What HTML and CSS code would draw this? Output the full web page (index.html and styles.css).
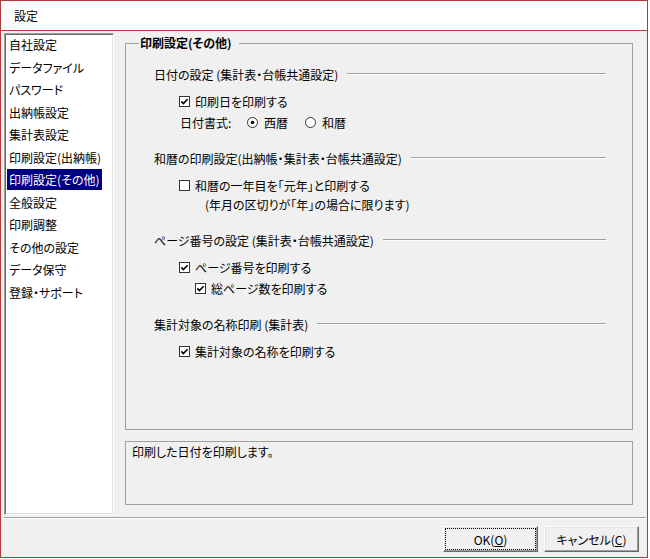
FILE: index.html
```html
<!DOCTYPE html>
<html lang="ja">
<head>
<meta charset="utf-8">
<title>設定</title>
<link rel="stylesheet" href="styles.css">
</head>
<body>
<div class="window">
  <div class="titlebar">設定</div>
  <div class="client">
    <div class="main">
      <div class="tree">
        <ul class="tree-list">
          <li><span>自社設定</span></li>
          <li><span>データファイル</span></li>
          <li><span>パスワード</span></li>
          <li><span>出納帳設定</span></li>
          <li><span>集計表設定</span></li>
          <li><span>印刷設定(出納帳)</span></li>
          <li class="selected"><span>印刷設定(その他)</span></li>
          <li><span>全般設定</span></li>
          <li><span>印刷調整</span></li>
          <li><span>その他の設定</span></li>
          <li><span>データ保守</span></li>
          <li><span>登録・サポート</span></li>
        </ul>
      </div>
      <div class="pane">
        <fieldset class="group">
          <legend>印刷設定(その他)</legend>
          <div class="group-body">
            <div class="section">
              <div class="head"><span>日付の設定 (集計表・台帳共通設定)</span><i class="rule"></i></div>
              <label class="row opt">
                <svg class="cb" width="11" height="11" viewBox="0 0 11 11"><rect x="0.5" y="0.5" width="10" height="10" fill="#fff" stroke="#333"/><path d="M2.3 5.4 L4.4 7.6 L8.6 3.2" fill="none" stroke="#000" stroke-width="1.6"/></svg>
                <span>印刷日を印刷する</span>
              </label>
              <div class="row radio-row">
                <span class="fmt-label">日付書式:</span>
                <label class="radio">
                  <svg width="11" height="11" viewBox="0 0 11 11"><circle cx="5.5" cy="5.5" r="5" fill="#fff" stroke="#333"/><circle cx="5.5" cy="5.5" r="1.8" fill="#000"/></svg>
                  <span>西暦</span>
                </label>
                <label class="radio">
                  <svg width="11" height="11" viewBox="0 0 11 11"><circle cx="5.5" cy="5.5" r="5" fill="#fff" stroke="#333"/></svg>
                  <span>和暦</span>
                </label>
              </div>
            </div>
            <div class="section">
              <div class="head"><span>和暦の印刷設定(出納帳・集計表・台帳共通設定)</span><i class="rule"></i></div>
              <label class="row opt">
                <svg class="cb" width="11" height="11" viewBox="0 0 11 11"><rect x="0.5" y="0.5" width="10" height="10" fill="#fff" stroke="#333"/></svg>
                <span>和暦の一年目を「元年」と印刷する</span>
              </label>
              <div class="row note">(年月の区切りが「年」の場合に限ります)</div>
            </div>
            <div class="section">
              <div class="head"><span>ページ番号の設定 (集計表・台帳共通設定)</span><i class="rule"></i></div>
              <label class="row opt">
                <svg class="cb" width="11" height="11" viewBox="0 0 11 11"><rect x="0.5" y="0.5" width="10" height="10" fill="#fff" stroke="#333"/><path d="M2.3 5.4 L4.4 7.6 L8.6 3.2" fill="none" stroke="#000" stroke-width="1.6"/></svg>
                <span>ページ番号を印刷する</span>
              </label>
              <label class="row opt sub">
                <svg class="cb" width="11" height="11" viewBox="0 0 11 11"><rect x="0.5" y="0.5" width="10" height="10" fill="#fff" stroke="#333"/><path d="M2.3 5.4 L4.4 7.6 L8.6 3.2" fill="none" stroke="#000" stroke-width="1.6"/></svg>
                <span>総ページ数を印刷する</span>
              </label>
            </div>
            <div class="section">
              <div class="head"><span>集計対象の名称印刷 (集計表)</span><i class="rule"></i></div>
              <label class="row opt">
                <svg class="cb" width="11" height="11" viewBox="0 0 11 11"><rect x="0.5" y="0.5" width="10" height="10" fill="#fff" stroke="#333"/><path d="M2.3 5.4 L4.4 7.6 L8.6 3.2" fill="none" stroke="#000" stroke-width="1.6"/></svg>
                <span>集計対象の名称を印刷する</span>
              </label>
            </div>
          </div>
        </fieldset>
        <div class="desc">印刷した日付を印刷します。</div>
      </div>
    </div>
    <div class="sep"></div>
    <div class="footer">
      <button class="btn default">OK(<u>O</u>)</button>
      <button class="btn">キャンセル(<u>C</u>)</button>
    </div>
  </div>
</div>
</body>
</html>
```
FILE: styles.css
```css
html, body {
  margin: 0;
  padding: 0;
  background: #fff;
}
body {
  font-family: "Noto Sans CJK JP", "Noto Sans", sans-serif;
  font-size: 12px;
  color: #000;
  font-feature-settings: "palt";
}
.window {
  width: 648px;
  height: 558px;
  box-sizing: border-box;
  border: 1px solid #b23a3a;
  display: flex;
  flex-direction: column;
}
.titlebar {
  flex: none;
  height: 29px;
  line-height: 29px;
  padding-left: 13px;
  background: #fff;
  border-bottom: 1px solid #b23a3a;
}
.client {
  flex: 1;
  background: #f0f0f0;
  display: flex;
  flex-direction: column;
}
.main {
  height: 486px;
  display: flex;
}
.tree {
  margin: 2px 0 0 3px;
  width: 110px;
  height: 482px;
  box-sizing: border-box;
  background: #fff;
  border: 1px solid;
  border-color: #a0a0a0 #fff #fff #a0a0a0;
  box-shadow: inset 1px 1px #696969, inset -1px -1px #e3e3e3;
  padding: 1px 0 0 1px;
  overflow: hidden;
}
.tree-list {
  list-style: none;
  margin: -1px 0 0 0;
  padding: 0;
}
.tree-list li {
  height: 22.5px;
}
.tree-list span {
  display: inline-block;
  line-height: 21px;
  padding: 0 2px;
  margin-left: 1px;
  white-space: nowrap;
}
.tree-list .selected span {
  background: #000080;
  color: #fff;
}
.pane {
  margin-left: 11px;
  width: 508px;
  height: 486px;
  box-sizing: border-box;
  padding: 4px 0 12px 0;
  display: flex;
  flex-direction: column;
}
.group {
  flex: 1;
  min-width: 0;
  margin: 0;
  padding: 0;
  border: 1px solid #a0a0a0;
}
.group legend {
  margin-left: 13px;
  padding: 0 7px 0 1px;
  font-weight: bold;
  line-height: 16px;
}
.group-body {
  padding: 14px 26px 0 28px;
}
.section + .section {
  margin-top: 18px;
}
.head {
  height: 18px;
  display: flex;
  align-items: center;
  white-space: nowrap;
}
.rule {
  flex: 1;
  margin-left: 9px;
  height: 0;
  border-top: 1px solid #a0a0a0;
  border-bottom: 1px solid #fff;
}
.row {
  height: 18px;
  display: flex;
  align-items: center;
  white-space: nowrap;
}
.head + .row {
  margin-top: 9px;
}
.row + .row {
  margin-top: 3px;
}
.opt {
  padding-left: 25px;
  gap: 5px;
}
.opt.sub {
  padding-left: 41px;
}
.row.note {
  margin-top: 1px;
  padding-left: 51px;
}
.radio-row {
  padding-left: 26px;
}
.fmt-label {
  width: 67px;
}
.radio {
  display: flex;
  align-items: center;
  gap: 6px;
}
.radio + .radio {
  margin-left: 17px;
}
.cb, .radio svg {
  flex: none;
  display: block;
}
.desc {
  flex: none;
  height: 64px;
  margin-top: 11px;
  box-sizing: border-box;
  border: 1px solid #a0a0a0;
  padding: 2px 6px;
  line-height: 16px;
}
.sep {
  height: 0;
  margin: 0 1px 0 3px;
  border-top: 1px solid #a0a0a0;
  border-bottom: 1px solid #fff;
}
.footer {
  display: flex;
  justify-content: flex-end;
  gap: 6px;
  padding: 7px 8px 0 0;
}
.btn {
  width: 95px;
  height: 26px;
  box-sizing: border-box;
  margin: 0;
  padding: 0;
  font: inherit;
  font-feature-settings: "palt";
  color: #000;
  background: #f0f0f0;
  border: 1px solid;
  border-color: #fff #696969 #696969 #fff;
  box-shadow: inset -1px -1px #a0a0a0, inset 1px 1px #e3e3e3;
}
.btn.default {
  outline: 1px dotted #000;
  outline-offset: -3px;
}
```
